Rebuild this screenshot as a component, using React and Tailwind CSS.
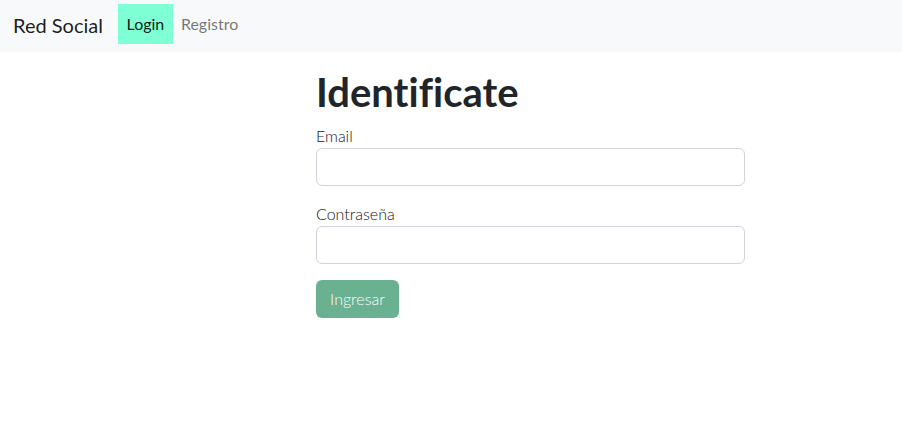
export default function App() {
  return (
    <div className="min-h-[437px] bg-white text-[#212529] [font-variant-ligatures:none]" style={{ fontFamily: 'Lato, sans-serif' }}>
      <nav className="h-[52px] bg-[#f8f9fa] flex items-start pl-[13px]">
        <span className="text-[20px] leading-[30px] mt-[10px] mr-[15px] text-black/90">Red Social</span>
        <a className="mt-[4px] h-[40px] w-[55px] bg-[#7fffd4] flex items-center justify-center text-[16px] text-black/90">Login</a>
        <a className="mt-[4px] h-[40px] px-[8px] flex items-center text-[16px] text-black/55">Registro</a>
      </nav>
      <div className="pl-[316px] pt-[16px]">
        <div className="w-[429px]">
          <h1 className="text-[40px] leading-[48px] font-bold mb-[8px]">Identificate</h1>
          <label className="block text-[16px] leading-[24px] font-light text-[#111418]">Email</label>
          <input className="block w-full h-[38px] rounded-[6px] border border-[#ced4da] mb-[16px]" />
          <label className="block text-[16px] leading-[24px] font-light text-[#111418]">Contraseña</label>
          <input type="password" className="block w-full h-[38px] rounded-[6px] border border-[#ced4da] mb-[16px]" />
          <button className="h-[38px] w-[83px] rounded-[6px] bg-[#69b190] text-white text-[16px] font-light">Ingresar</button>
        </div>
      </div>
    </div>
  );
}
